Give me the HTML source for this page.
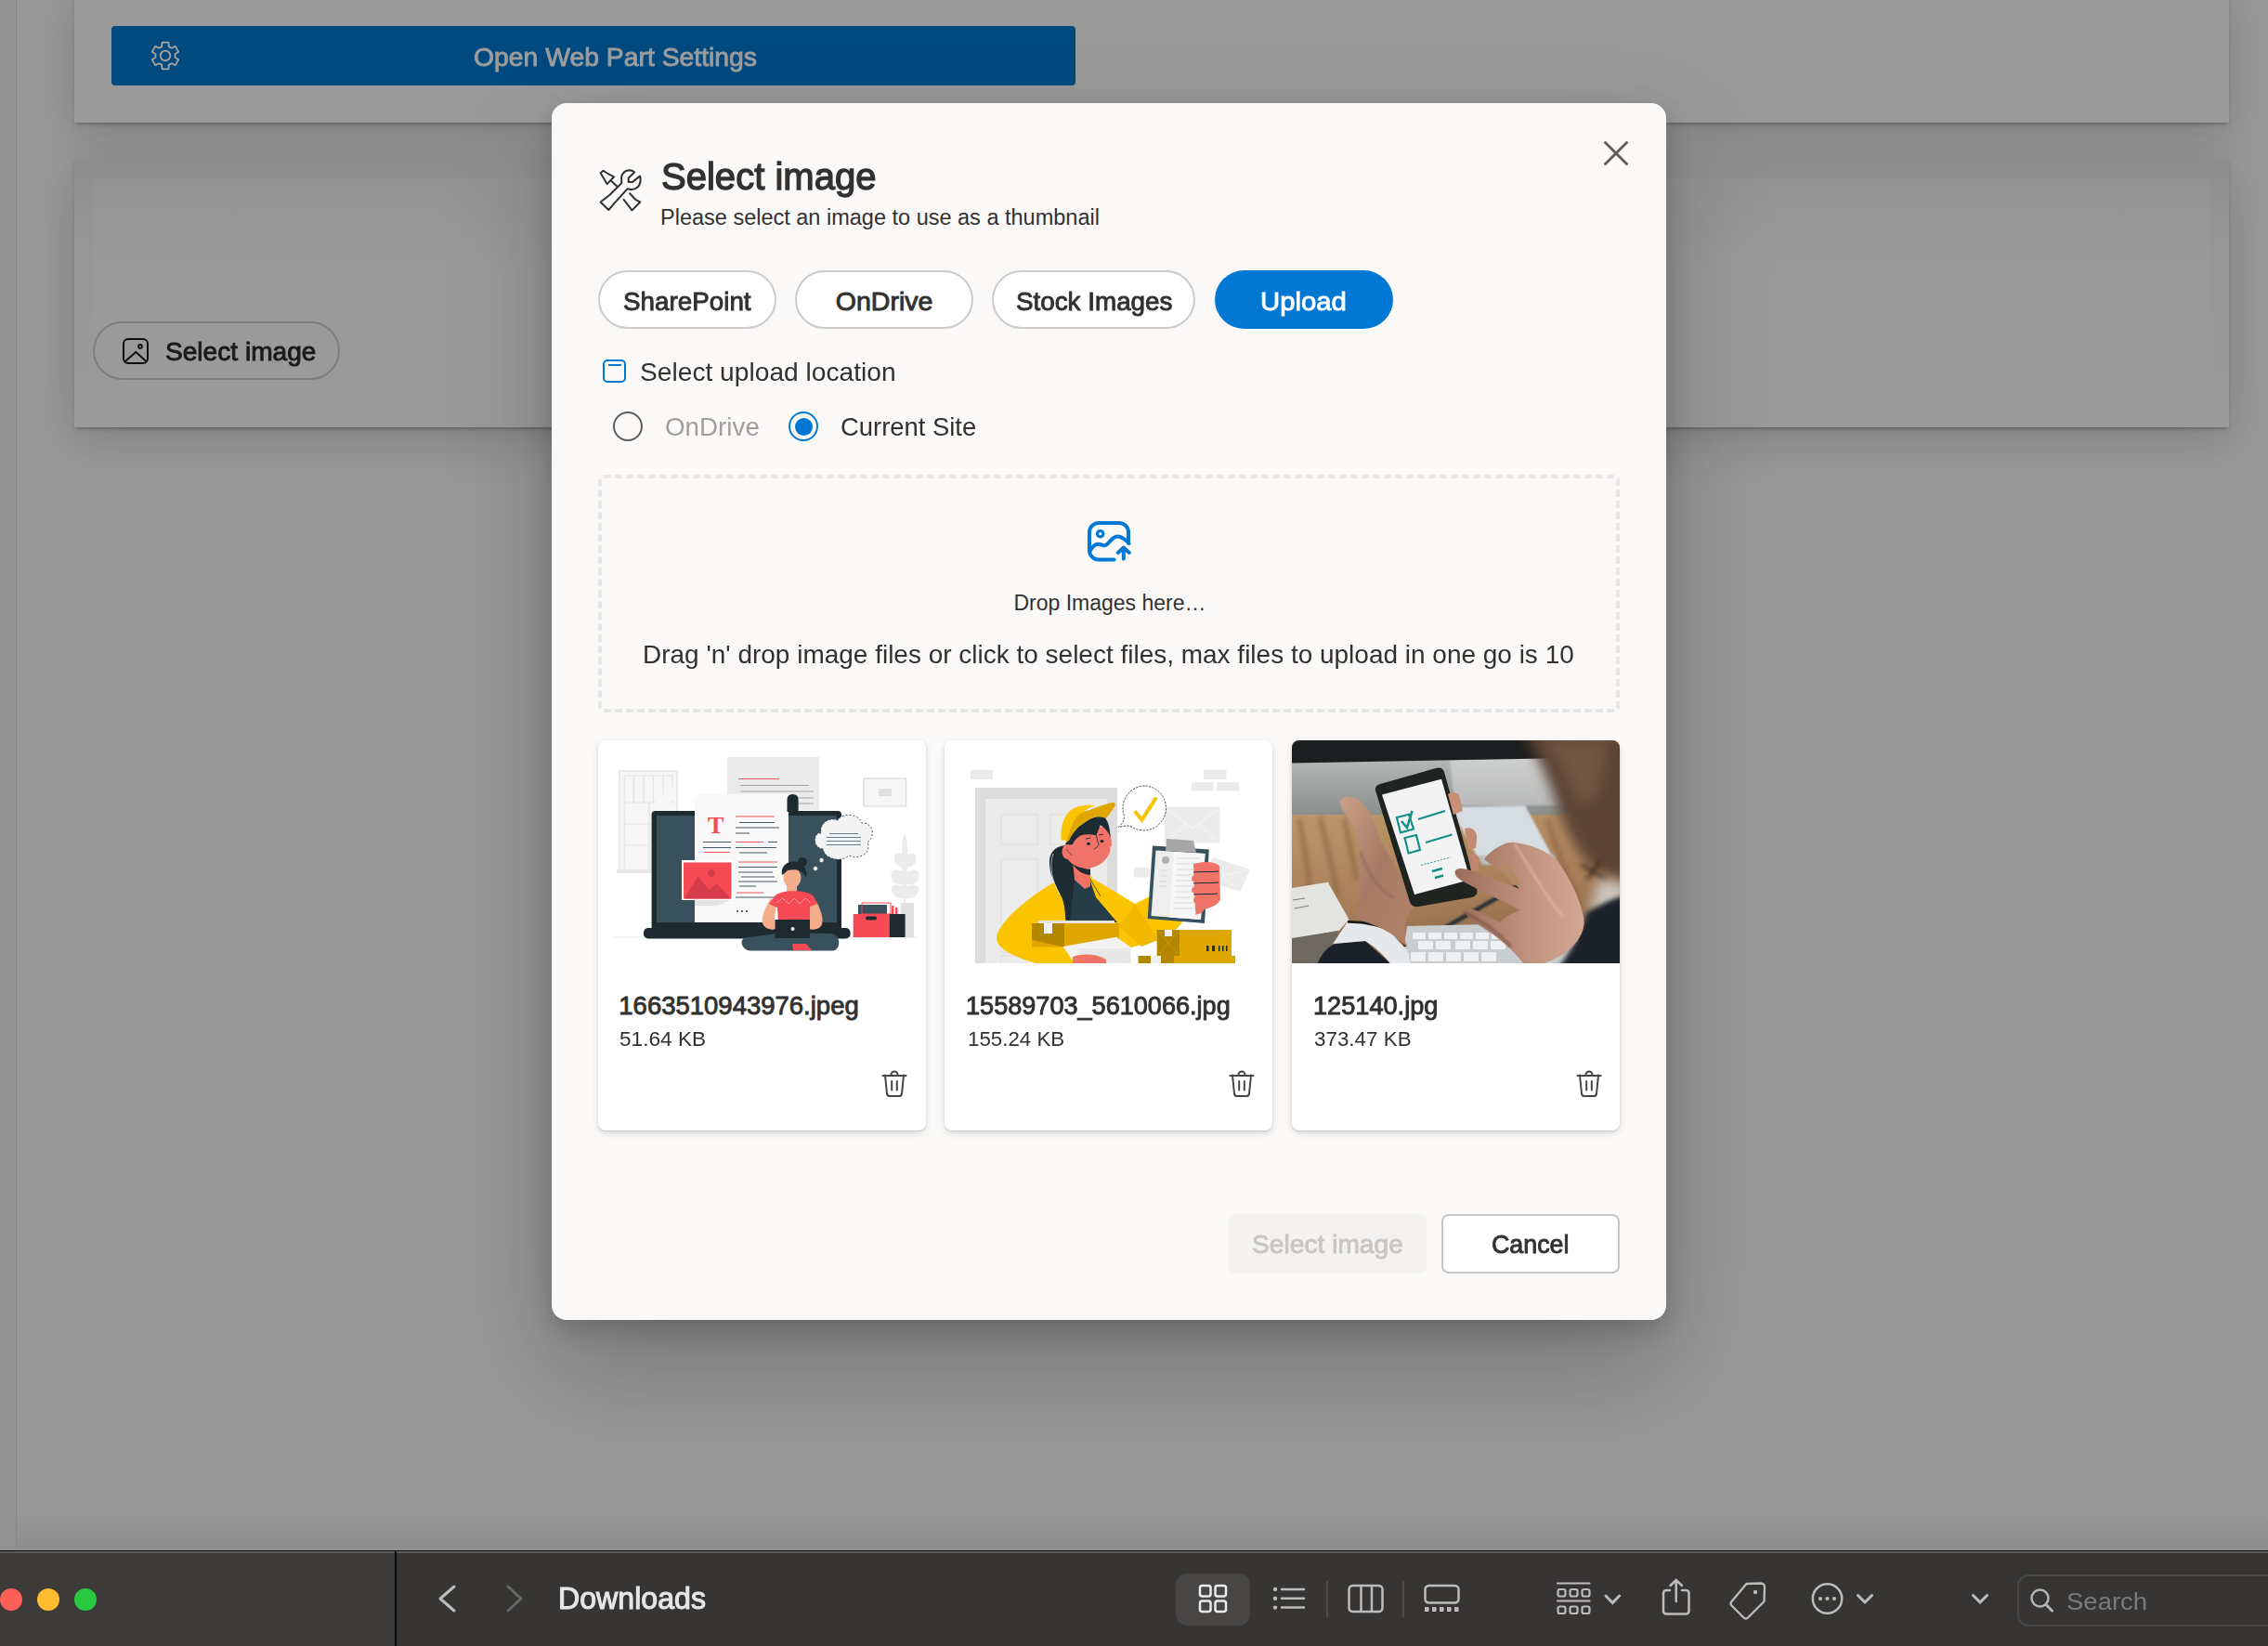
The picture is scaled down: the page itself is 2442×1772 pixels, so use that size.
<!DOCTYPE html>
<html><head><meta charset="utf-8">
<style>
html,body{margin:0;padding:0;}
body{width:2442px;height:1772px;overflow:hidden;position:relative;background:#999999;font-family:"Liberation Sans",sans-serif;}
.a{position:absolute;}
.t{position:absolute;white-space:nowrap;line-height:1;transform-origin:0 0;}
.b{font-weight:700;}
</style></head><body>
<!-- page background -->
<div class="a" style="left:0;top:0;width:17px;height:1669px;background:#929292;"></div>
<div class="a" style="left:17px;top:0;width:1px;height:1669px;background:#868686;"></div>
<div class="a" style="left:18px;top:0;width:2424px;height:1669px;background:#989898;"></div>
<div class="a" style="left:80px;top:-10px;width:2320px;height:142px;background:#9a9a9a;box-shadow:0 3px 4px -1px rgba(0,0,0,.25),0 12px 50px rgba(0,0,0,.16);"></div>
<div class="a" style="left:120px;top:28px;width:1038px;height:64px;background:#004a80;border-radius:4px;"></div>
<svg class="a" style="left:162px;top:44px;" width="32" height="32" viewBox="0 0 32 32"><path d="M12.20 6.10 L12.67 1.58 L19.33 1.58 L19.80 6.10 L22.67 7.76 L26.82 5.91 L30.15 11.67 L26.47 14.34 L26.47 17.66 L30.15 20.33 L26.82 26.09 L22.67 24.24 L19.80 25.90 L19.33 30.42 L12.67 30.42 L12.20 25.90 L9.33 24.24 L5.18 26.09 L1.85 20.33 L5.53 17.66 L5.53 14.34 L1.85 11.67 L5.18 5.91 L9.33 7.76 Z" fill="none" stroke="#a8a49e" stroke-width="1.8" stroke-linejoin="round"/><circle cx="16" cy="16" r="5.3" fill="none" stroke="#a8a49e" stroke-width="1.8"/></svg>

<div class="a" style="left:80px;top:172px;width:2320px;height:288px;background:linear-gradient(#8e8e8e,#989898 110px,#9a9a9a);box-shadow:0 3px 4px -1px rgba(0,0,0,.25),0 12px 50px rgba(0,0,0,.16);"></div>
<div class="a" style="left:100px;top:192px;width:2280px;height:268px;background:linear-gradient(#939393,#9a9a9a 100px,#9a9a9a);"></div>
<div class="a" style="left:100px;top:346px;width:262px;height:59px;border:2px solid #7d7d7d;border-radius:32px;"></div>
<svg class="a" style="left:131px;top:363px;" width="30" height="30" viewBox="0 0 30 30"><rect x="2" y="2" width="26" height="26" rx="5" fill="none" stroke="#0f0f0f" stroke-width="2"/><path d="M3.6 26.2 L15.3 15.9 L26.4 25.9" fill="none" stroke="#0f0f0f" stroke-width="2" stroke-linejoin="round"/><circle cx="20" cy="9.9" r="1.9" fill="none" stroke="#0f0f0f" stroke-width="1.8"/></svg>

<!-- modal -->
<div class="a" style="left:594px;top:111px;width:1200px;height:1310px;background:#faf9f8;border-radius:16px;box-shadow:0 51px 115px rgba(0,0,0,.22),0 10px 29px rgba(0,0,0,.18);"></div>
<svg class="a" style="left:640px;top:178px;" width="56" height="56" viewBox="640 178 56 56"><g fill="none" stroke="#323130" stroke-width="2" stroke-linejoin="round" stroke-linecap="round">
<path d="M646.6 186.2 L649.5 183.7 C652 185.5 656 188 661.1 190.3 L653.6 198.1 Z"/>
<path d="M658.4 195 L664.5 200.8"/>
<path d="M678.1 208.3 L684.2 214.8 L689.3 217.5 L680.5 226.4 L671.6 214.8"/>
<path d="M646.6 217.5 L655.3 226 L661.4 218.9 L675.7 203.2 C677 203.5 678 204 679.1 203.9 C685 204.5 689.5 200 689.6 194 C689.8 192 689.5 190.5 689 189.6 L680.8 196.1 L676.7 196.1 L676.7 191.7 L683.2 185.2 C681.5 183.8 679.5 183.3 677.4 183.3 C672 183.5 668.5 188 669.2 193 L669.3 197.1 L656.3 210 Z"/>
</g></svg>

<svg class="a" style="left:1720px;top:145px;" width="40" height="40" viewBox="1720 145 40 40"><path d="M1728.5 153.5 L1751.5 176.5 M1751.5 153.5 L1728.5 176.5" stroke="#605e5c" stroke-width="3" stroke-linecap="round"/></svg>
<!-- pills -->
<div class="a" style="left:644px;top:291px;width:188px;height:59px;border:2px solid #cdcbc9;border-radius:32px;background:#fff;"></div>
<div class="a" style="left:856px;top:291px;width:188px;height:59px;border:2px solid #cdcbc9;border-radius:32px;background:#fff;"></div>
<div class="a" style="left:1068px;top:291px;width:215px;height:59px;border:2px solid #cdcbc9;border-radius:32px;background:#fff;"></div>
<div class="a" style="left:1308px;top:291px;width:192px;height:63px;border-radius:32px;background:#0078d4;"></div>

<!-- checkbox row -->
<div class="a" style="left:649px;top:387px;width:21px;height:21px;border:2px solid #0078d4;border-radius:5px;"></div>
<div class="a" style="left:655px;top:391.5px;width:14px;height:2px;background:#0078d4;"></div>
<!-- radios -->
<div class="a" style="left:660px;top:443px;width:28px;height:28px;border:2px solid #5c5b5a;border-radius:50%;"></div>
<div class="a" style="left:849px;top:443px;width:28px;height:28px;border:2px solid #0078d4;border-radius:50%;"></div>
<div class="a" style="left:855.5px;top:449.5px;width:19px;height:19px;background:#0078d4;border-radius:50%;"></div>

<!-- dropzone -->
<div class="a" style="left:644px;top:511px;width:1092px;height:248px;border:4px dashed #e8e7e6;border-radius:6px;"></div>
<svg class="a" style="left:1160px;top:550px;" width="70" height="70" viewBox="1160 550 70 70"><g fill="none" stroke="#0078d4" stroke-width="4" stroke-linecap="round" stroke-linejoin="round">
<path d="M1199.5 602.5 L1183 602.5 A10 10 0 0 1 1173 592.5 L1173 573 A10 10 0 0 1 1183 563 L1205 563 A10 10 0 0 1 1215 573 L1215 584.5"/>
<path d="M1174 592.5 C1177 587 1181 585 1184.5 586 C1187.5 587 1189 588.5 1192 586 C1196 582 1199 577 1204 577.5 C1208 578 1212 581 1215.5 585"/>
<circle cx="1184.7" cy="574.7" r="3.2" stroke-width="3.2"/>
<path d="M1209.8 601.5 L1209.8 590 M1203.8 595 L1209.8 589.5 L1215.8 595"/>
</g></svg>

<!-- cards -->
<div class="a" style="left:644px;top:797px;width:353px;height:420px;background:#fff;border-radius:8px;box-shadow:0 3px 7px rgba(0,0,0,.13),0 1px 2px rgba(0,0,0,.11);"></div>
<div class="a" style="left:1017px;top:797px;width:353px;height:420px;background:#fff;border-radius:8px;box-shadow:0 3px 7px rgba(0,0,0,.13),0 1px 2px rgba(0,0,0,.11);"></div>
<div class="a" style="left:1391px;top:797px;width:353px;height:420px;background:#fff;border-radius:8px;box-shadow:0 3px 7px rgba(0,0,0,.13),0 1px 2px rgba(0,0,0,.11);"></div>
<svg class="a" style="left:644px;top:797px;" width="353" height="240" viewBox="0 0 353 240">
<line x1="15" y1="212" x2="345" y2="212" stroke="#ececec" stroke-width="1"/>
<!-- window -->
<rect x="23" y="33" width="62" height="109" fill="#f6f6f6" stroke="#e8e8e8" stroke-width="2"/>
<rect x="20" y="139" width="37" height="4" fill="#e6e6e6"/>
<g stroke="#e3e3e3" stroke-width="1.2" fill="none">
<path d="M28 38 H80 V67 H28 Z M38.5 38 V67 M49 38 V67 M59.5 38 V67 M70 38 V67"/>
<path d="M28 67 V138 M28 90 H55 M28 113 H55 M55 67 V138 M55 90 H82"/>
</g>
<path d="M60 70 L82 48 L82 62 L64 80 Z" fill="#f7f7f7"/>
<!-- back paper -->
<rect x="139" y="18" width="99" height="57" fill="#ebebeb"/>
<g stroke-width="1" fill="none">
<path d="M151 41.5 H195" stroke="#f2555f"/>
<path d="M153 48.5 H227 M153 55 H232" stroke="#9aa3a8"/>
<path d="M208 62 H232 M215 68 H232" stroke="#9aa3a8"/>
</g>
<!-- picture frame -->
<rect x="286" y="41" width="45.5" height="30" fill="#f6f6f6" stroke="#e0e0e0" stroke-width="1.5"/>
<rect x="302" y="52" width="14" height="8" fill="#e0e0e0"/>
<!-- laptop -->
<rect x="57.6" y="76" width="204.4" height="130" rx="4" fill="#1d2b31"/>
<rect x="63" y="81" width="194" height="115" fill="#38515c"/>
<rect x="49" y="202" width="222.6" height="11.5" rx="5" fill="#1d2b31"/>
<!-- document -->
<path d="M104 196 V66 Q104 58 112 58 H205 V196 Z" fill="#f8f8f8"/>
<path d="M203.5 77 V64 Q203.5 58 209.5 58 Q215.6 58 215.6 64 V77 Z" fill="#1d2b31"/>
<text x="118" y="100" font-family="Liberation Serif" font-weight="700" font-size="26" fill="#f64a55">T</text>
<g stroke-width="1" fill="none">
<path d="M148 82 H190 M114 120.5 H142 M148 109.5 H178 M151 131 H193 M149 164 H178" stroke="#f2555f"/>
<path d="M152 88.5 H190 M148 94 H195 M148 100 H163 M113 109.5 H143 M113 115.5 H143 M183 109.5 H193 M148 115.5 H192 M152 121 H182 M151 136.5 H193 M151 142 H188 M154 147 H190 M151 152 H193 M152 157 H170 M148 169 H190" stroke="#455a64"/>
</g>
<path d="M149 184 H151 M154 184 H156 M159 184 H161" stroke="#1d2b31" stroke-width="1.5"/>
<!-- red image -->
<path d="M104 172 H143 L128 178 H104 Z" fill="#e4e4e4"/>
<rect x="90" y="129" width="54.5" height="43" fill="#ffffff"/>
<rect x="92" y="131.5" width="51.5" height="39" fill="#f64a55"/>
<path d="M93 170.5 L107.5 146.5 L120 161 L127.5 154 L143 170.5 Z" fill="#d63d4a"/>
<circle cx="122" cy="143" r="4" fill="#d63d4a"/>
<!-- cloud -->
<g fill="#f3f3f3" stroke="#263238" stroke-width="0.8" stroke-dasharray="2 2">
<path d="M240 100 C232 98 230 116 242 117 C244 128 262 132 270 124 C282 130 295 120 290 110 C300 102 295 88 284 89 C280 78 262 78 258 86 C248 82 238 90 240 100 Z"/>
</g>
<g stroke="#607d8b" stroke-width="1" fill="none"><path d="M249 100.5 H280 M246 104.5 H283 M246 108.5 H283 M246 112.5 H283"/></g>
<circle cx="240.5" cy="129" r="2.5" fill="#f3f3f3" stroke="#263238" stroke-width="0.5"/>
<circle cx="234" cy="138" r="2.5" fill="#f3f3f3" stroke="#263238" stroke-width="0.5"/>
<!-- plant -->
<g fill="#ebebeb">
<path d="M330 101 C334 104 334 130 331 175 L329 175 C326 130 326 104 330 101 Z"/>
<path d="M330 125 C322 118 316 122 320 132 C324 138 330 136 330 136 Z"/>
<path d="M331 125 C339 118 345 122 341 132 C337 138 331 136 331 136 Z"/>
<path d="M330 143 C320 136 312 140 317 151 C322 157 330 155 330 155 Z"/>
<path d="M331 143 C341 136 349 140 344 151 C339 157 331 155 331 155 Z"/>
<path d="M330 158 C318 152 312 158 318 166 C323 172 330 170 330 170 Z"/>
<path d="M331 158 C343 152 349 158 343 166 C338 172 331 170 331 170 Z"/>
</g>
<rect x="326" y="175" width="14" height="37" fill="#e0e0e0"/>
<!-- boxes -->
<rect x="280" y="177" width="31" height="10" fill="#38515c"/>
<path d="M284 175 H315 V187 H284 Z" fill="none" stroke="#f64a55" stroke-width="1"/>
<rect x="316" y="178" width="2.5" height="9" fill="#f64a55"/>
<rect x="320" y="180" width="2.5" height="7" fill="#f64a55"/>
<rect x="274.7" y="187" width="39" height="25" fill="#f64a55"/>
<rect x="288" y="189.5" width="12" height="4" rx="2" fill="#1d2b31"/>
<rect x="313.6" y="187" width="17" height="25" fill="#1d2b31"/>
<!-- girl -->
<path d="M162 212 C150 212 154 226 164 226.5 L252 226.5 C262 226.5 262 208 250 208 L200 207 Z" fill="#38515c"/>
<path d="M209 219 L224 219 L230 226 L210 226 Z" fill="#f64a55"/>
<path d="M186 170 C180 180 174 192 178 199 C182 205 192 205 194 200 L190 193 C190 186 192 180 192 176 Z" fill="#f4ad8a"/>
<path d="M234 172 C240 182 244 194 240 200 C236 205 226 205 224 200 L228 193 C228 186 228 180 228 176 Z" fill="#f4ad8a"/>
<path d="M203 154 H214 V165 H203 Z" fill="#f4ad8a"/>
<path d="M190 168 C195 161 224 160 232 168 L236 176 L228 179 L228 195 L194 195 L193 180 L184 176 Z" fill="#f64a55"/>
<path d="M192 175 L199 170 L205 176 L211 170 L217 176 L223 170 L229 175" stroke="#ffffff" stroke-width="0.7" fill="none" stroke-dasharray="1.5 1"/>
<ellipse cx="209" cy="148" rx="9.5" ry="11" fill="#f4ad8a"/>
<path d="M198 145 C196 134 206 129 214 131 C222 133 226 140 224 148 C220 140 214 138 204 140 C202 142 200 144 198 145 Z" fill="#1d2b31"/>
<circle cx="220" cy="131" r="5" fill="#1d2b31"/>
<rect x="190.6" y="193" width="37.4" height="20" fill="#1d2b31"/>
<circle cx="209.5" cy="203" r="2" fill="#ffffff"/>
</svg>
<svg class="a" style="left:1017px;top:797px;" width="353" height="240" viewBox="0 0 353 240">
<!-- small rects -->
<g fill="#ebebeb">
<rect x="28" y="32" width="24" height="10"/>
<rect x="279" y="32" width="24.5" height="10"/>
<rect x="266" y="45" width="23.5" height="9.5"/>
<rect x="293" y="45" width="24" height="9.5"/>
<rect x="204" y="137" width="17" height="10.5"/>
</g>
<!-- door -->
<rect x="33" y="51" width="153" height="189" fill="#dcdcdc"/>
<rect x="44" y="63" width="131" height="177" fill="#ebebeb"/>
<g fill="#ececec" stroke="#dddddd" stroke-width="1">
<rect x="61" y="80" width="39" height="32"/>
<rect x="114" y="80" width="38" height="32"/>
<rect x="61" y="128" width="39" height="100"/>
<rect x="114" y="128" width="38" height="100"/>
<rect x="61" y="232" width="39" height="10"/>
</g>
<!-- envelopes -->
<rect x="237" y="71.6" width="59.5" height="39" fill="#ebebeb"/>
<path d="M240 74 L267 95 L294 74 M240 109 L260 90 M294 109 L274 90" stroke="#f8f8f8" stroke-width="1" fill="none"/>
<path d="M289 126 L329 139 L318 163 L278 150 Z" fill="#ebebeb"/>
<path d="M289 126 L300 146 L329 139 M300 146 L318 163" stroke="#f8f8f8" stroke-width="1" fill="none"/>
<!-- speech bubble -->
<path d="M216.3 49 A24 24 0 1 1 203 94 C198 90 192 93 187.5 93.4 C193 88 194 84 193 80 A24 24 0 0 1 216.3 49 Z" fill="#ffffff" stroke="#263238" stroke-width="0.9" stroke-dasharray="2.2 1.4"/>
<path d="M204.7 76.3 L212.5 85.6 L228 61.5" stroke="#f9c300" stroke-width="4" fill="none"/>
<!-- yellow body -->
<path d="M56 212 C58 196 92 166 124 150 L156 147 L172 156 L205 176 L221 168 L257 194.5 L250 203 L212 220 L140 240 L98 240 C72 232 56 224 56 212 Z" fill="#fbc400"/>
<path d="M188 200 L212 222 L230 215 L205 176 Z" fill="#f1b800"/>
<!-- ponytail -->
<path d="M130 113 C118 114 112 122 113 134 C114 148 122 160 126.7 170 C130 180 130 188 130.4 194.5 L156 194.5 C152 180 148 165 145 152 C142 142 140 134 137.7 128.6 Z" fill="#1d2b32"/>
<path d="M117 122 C112 135 116 152 124 166" stroke="#ffffff" stroke-width="0.6" fill="none"/>
<!-- apron -->
<path d="M135 194.5 L140 150 L155.6 146 L163.4 169.6 L186 196 Z" fill="#263d47"/>
<path d="M155 146 L163.4 169.6 L169 170 L158 146 Z" fill="#fbc400"/>
<path d="M156 148 L168 168" stroke="#1d2b32" stroke-width="0.7"/>
<!-- neck & face -->
<path d="M137.7 127 L157 133 L157 157 L151 160 L140 150 Z" fill="#ef7467"/>
<path d="M137.7 128.6 C144 136 150 139 157 139 L157 145 C150 145 142 140 137.7 133 Z" fill="#1d2b32"/>
<ellipse cx="154" cy="115.5" rx="25" ry="22" transform="rotate(-15 154 115.5)" fill="#ef7467"/>
<ellipse cx="132.5" cy="120" rx="6" ry="8" fill="#ef7467"/>
<path d="M131 117 C133 119 135 122 137 124" stroke="#1d2b32" stroke-width="0.6" fill="none"/>
<path d="M164 92 C170 92 176 96 179 102 L180 114 L166 110 Z" fill="#ef7467"/>
<!-- hair on head -->
<path d="M130.4 112.2 C134 100 140 94 146.8 91.3 C154 86 160 82 165 82.2 L172.3 82.2 C175 86 177 90 177.7 95.8 L178.7 104 C176 98 172 94 167.7 91.3 C166 95 165 99 163.2 102.2 C158 101 152 101 146.8 102.2 C142 105 139 109 137.7 112.2 Z" fill="#1d2b32"/>
<!-- cap -->
<path d="M125.8 107.7 C124.5 98 126 86 134 77 C140 71 150 69 162 70 C155 73 150 76 146 80 C140 86 137 95 134 107.7 Z" fill="#fbc400"/>
<path d="M130.4 111.3 C134 100 137 90 141.3 84 C145 79 149 77 154 75.8 C164 72 174 68 182.3 66.7 C184 68 184 70 183.2 71.2 C180 76 177 80 174 84 C171 83 168 82 165 82 C156 84 151 88 146.8 91.3 C141 96 137 102 134 107.7 Z" fill="#e0a600"/>
<!-- face details -->
<ellipse cx="155" cy="111.3" rx="2" ry="1.6" fill="#1d2b32"/>
<ellipse cx="169.5" cy="108.6" rx="2" ry="1.6" fill="#1d2b32"/>
<path d="M152 106 L157 105 M166 102 L171 101" stroke="#1d2b32" stroke-width="0.9"/>
<path d="M163 101 L166 113 L163 116 L161 117" stroke="#1d2b32" stroke-width="0.8" fill="none"/>
<!-- clipboard -->
<path d="M224 113.6 L284.8 117.5 L280 197 L218.7 192 Z" fill="#37525e"/>
<path d="M227.5 118.5 L280.5 122 L276 193 L222.5 189 Z" fill="#eeeeee"/>
<path d="M247 120 L280.5 122 L276 193 L242 190.5 Z" fill="#f7f7f7"/>
<path d="M239 106 L268 108 L271 121 L238 119 Z" fill="#a6a6a6"/>
<circle cx="238" cy="129" r="4" fill="#b0b0b0"/>
<g stroke="#d0d0d0" stroke-width="0.8"><path d="M250 127 H275 M250 133 H272 M250 139 H275 M249 145 H274 M249 151 H272 M248 157 H273 M248 163 H272 M248 169 H273 M247 175 H272 M247 181 H270 M232 140 H240 M232 146 H240 M231 152 H239 M231 157 H239"/></g>
<!-- hand -->
<g fill="#ef7467">
<path d="M268 133 C280 130 292 131 296 136 L297 172 C292 180 280 182 270 184 Z"/>
<ellipse cx="283" cy="137" rx="13" ry="6"/>
<ellipse cx="281" cy="149" rx="15" ry="6.5"/>
<ellipse cx="281" cy="161" rx="15" ry="6.5"/>
<ellipse cx="281" cy="172" rx="13" ry="6.5"/>
<path d="M276 176 C282 184 278 186 270 188 L272 176 Z"/>
</g>
<g stroke="#1d2b32" stroke-width="1" fill="none"><path d="M268 142 C276 141 286 142 295 141 M268 154 C276 153 286 154 295 153 M268 166 C276 165 286 166 294 165"/></g>
<!-- box left -->
<rect x="101" y="194" width="82" height="3" fill="#e4e4e4"/>
<rect x="94" y="197" width="94" height="25.6" fill="#e0a600"/>
<path d="M94 197 L129 197 L129 222.6 L94 215 Z" fill="#b38600"/>
<rect x="107" y="197" width="9" height="11" fill="#f0f0f0"/>
<!-- envelope bottom -->
<path d="M127.6 222 L185 211.7 L200.8 223 L200.8 240 L140 240 Z" fill="#f2f2f2"/>
<path d="M143 224 L200 224 L200 240 L150 240 Z" fill="#e8e8e8"/>
<path d="M138 233 C150 229 164 230 174 236 L174 240 L138 240 Z" fill="#ef7467"/>
<!-- box right -->
<rect x="228.8" y="204" width="80.2" height="28" fill="#e0a600"/>
<rect x="228.8" y="204" width="24.2" height="28" fill="#b38600"/>
<path d="M231 206 L251 230 M251 206 L231 230" stroke="#e0a600" stroke-width="0.6"/>
<rect x="237" y="204" width="8" height="7" fill="#f0f0f0"/>
<g fill="#1d2b32"><rect x="282" y="221" width="2.5" height="6"/><rect x="288" y="221" width="3" height="6"/><rect x="295" y="221" width="1.5" height="6"/><rect x="299" y="221" width="1.5" height="6"/><rect x="303" y="221" width="1.5" height="6"/></g>
<rect x="208.6" y="232" width="13.5" height="8" fill="#b38600"/>
<rect x="222" y="232" width="11" height="8" fill="#f0f0f0"/>
<rect x="233" y="232" width="80" height="8" fill="#e0a600"/>
<rect x="233" y="232" width="14" height="8" fill="#b38600"/>
</svg>
<svg class="a" style="left:1391px;top:797px;" width="353" height="240" viewBox="0 0 353 240">
<defs>
<clipPath id="c3"><path d="M0 240 V8 A8 8 0 0 1 8 0 H345 A8 8 0 0 1 353 8 V240 Z"/></clipPath>
<filter id="bl1" x="-20%" y="-20%" width="140%" height="140%"><feGaussianBlur stdDeviation="1"/></filter>
<filter id="bl2" x="-20%" y="-20%" width="140%" height="140%"><feGaussianBlur stdDeviation="2.5"/></filter>
<filter id="bl4" x="-40%" y="-40%" width="180%" height="180%"><feGaussianBlur stdDeviation="7"/></filter>
<linearGradient id="mon" x1="0" y1="0" x2="0" y2="1"><stop offset="0" stop-color="#b8b9b9"/><stop offset="1" stop-color="#8b8f8c"/></linearGradient>
<linearGradient id="mon2" x1="0" y1="0" x2="0" y2="1"><stop offset="0" stop-color="#cfd0d0"/><stop offset="1" stop-color="#b9bbba"/></linearGradient>
<linearGradient id="desk" x1="0" y1="0" x2="0.3" y2="1"><stop offset="0" stop-color="#bd986c"/><stop offset="0.6" stop-color="#a98058"/><stop offset="1" stop-color="#8d6a4e"/></linearGradient>
<linearGradient id="skinL" x1="0" y1="0" x2="1" y2="1"><stop offset="0" stop-color="#c9a087"/><stop offset="0.5" stop-color="#a57a63"/><stop offset="1" stop-color="#b4836b"/></linearGradient>
<linearGradient id="skinR" x1="0" y1="0" x2="1" y2="0"><stop offset="0" stop-color="#9a6e5a"/><stop offset="0.6" stop-color="#c39580"/><stop offset="1" stop-color="#d2a892"/></linearGradient>
</defs>
<g clip-path="url(#c3)">
<rect x="0" y="0" width="353" height="240" fill="#a98462"/>
<!-- desk -->
<rect x="0" y="76" width="353" height="164" fill="url(#desk)"/>
<g stroke="#7a5436" stroke-width="5" opacity="0.5" fill="none" filter="url(#bl2)">
<path d="M8 84 C14 120 20 150 22 190 M30 82 C40 120 46 150 50 170 M56 84 C62 110 66 130 70 150 M250 80 C262 110 280 150 290 190 M275 85 C285 120 300 150 310 180"/>
</g>
<!-- monitor -->
<path d="M0 22 L300 17 L300 80 L0 80 Z" fill="url(#mon)"/>
<path d="M170 18 L290 17 L292 70 L175 70 Z" fill="url(#mon2)" filter="url(#bl1)"/>
<!-- top dark -->
<path d="M0 0 H300 V19 L0 24.5 Z" fill="#1c1f1f"/>
<!-- laptop -->
<path d="M170 72 L251 70 L280 124 L200 126 Z" fill="#d6dde1" filter="url(#bl1)"/>
<path d="M200 124 L282 123 L286 132 L205 134 Z" fill="#b9c0c4" filter="url(#bl1)"/>
<!-- paper bottom left -->
<path d="M0 214 L0 159 L38.7 152.7 L61.6 193 L50.5 205 Z" fill="#e3e4e0"/>
<path d="M0 213 L50 205 L46 240 L0 240 Z" fill="#6e6a62"/>
<path d="M1 172 L14 170 M3 181 L18 178" stroke="#555" stroke-width="1.2" opacity="0.7"/>
<!-- pen -->
<path d="M150 210 L252 152" stroke="#2b3036" stroke-width="4.5" stroke-linecap="round" filter="url(#bl1)"/>
<path d="M244 155 L252 151" stroke="#eeeeee" stroke-width="3" stroke-linecap="round"/>
<!-- keyboard -->
<path d="M124 200 L300 196 L320 240 L118 240 Z" fill="#c9cdcf"/>
<g fill="#eff0f1"><rect x="130" y="207" width="14" height="7" rx="1"/><rect x="147" y="207" width="14" height="7" rx="1"/><rect x="164" y="207" width="14" height="7" rx="1"/><rect x="181" y="207" width="14" height="7" rx="1"/><rect x="198" y="207" width="14" height="7" rx="1"/><rect x="215" y="207" width="14" height="7" rx="1"/><rect x="176" y="216" width="16" height="9" rx="1"/><rect x="195" y="216" width="16" height="9" rx="1"/><rect x="214" y="216" width="16" height="9" rx="1"/><rect x="136" y="216" width="16" height="9" rx="1"/><rect x="155" y="216" width="16" height="9" rx="1"/><rect x="128" y="228" width="16" height="10" rx="1"/><rect x="147" y="228" width="16" height="10" rx="1"/><rect x="166" y="228" width="16" height="10" rx="1"/><rect x="185" y="228" width="16" height="10" rx="1"/><rect x="204" y="228" width="16" height="10" rx="1"/></g>
<!-- right blurred person -->
<path d="M250 -10 H370 V150 C350 152 335 148 322 135 C305 118 292 90 284 66 C276 40 262 15 250 -10 Z" fill="#5c4436" filter="url(#bl4)"/>
<path d="M268 0 C284 14 300 40 306 70 L330 60 L340 0 Z" fill="#7a5e4c" opacity="0.7" filter="url(#bl4)"/>
<path d="M312 134 L338 150 M318 150 L332 130" stroke="#2a2420" stroke-width="3.5" fill="none" opacity="0.8" filter="url(#bl2)"/>
<path d="M330 150 C345 150 360 155 360 160 V190 L320 190 Z" fill="#d9dcdf" opacity="0.8" filter="url(#bl4)"/>
<path d="M318 185 C335 175 350 168 365 165 V250 H282 C300 230 312 205 318 185 Z" fill="#1f242b" filter="url(#bl2)"/>
<!-- suit sleeve & cuff -->
<path d="M27.6 240 C33 228 40 221 47.4 219 L79 216 L105.8 240 Z" fill="#1b2028"/>
<path d="M44.2 219 L60 195.3 C75 196 90 198 101.8 201.7 L124.7 227 L127.9 240 L105.8 240 C96 228 86 220 79 216 Z" fill="#e6e9ec"/>
<path d="M60 195.3 C80 195 100 200 112 208 C118 214 122 220 122.3 222" stroke="#1a1a1a" stroke-width="2.8" fill="none"/>
<rect x="101" y="198" width="5" height="7" fill="#f4f4f4" transform="rotate(20 103 201)"/>
<!-- left hand -->
<path d="M52 66 C54 60 64 59 72 64 C80 70 86 80 90 92 C94 104 98 114 104 124 L128 164 C132 172 136 178 130 182 C122 190 120 200 123 222 C110 208 95 200 68.7 192 C70 175 72 150 73.4 130 C74 115 70 100 64 88 C58 80 52 72 52 66 Z" fill="url(#skinL)"/>
<path d="M74 120 C80 140 92 160 110 170" stroke="#8a6450" stroke-width="3" fill="none" opacity="0.5" filter="url(#bl1)"/>
<!-- phone -->
<path d="M95 47 L155 30 Q162 28 164 34 L199 160 Q201 167 194 169 L136 179 Q129 180 127 174 L90 54 Q89 49 95 47 Z" fill="#1f2421"/>
<path d="M97 58.4 L161 41.8 L192 150 L132 166 Z" fill="#f3f3f3"/>
<g stroke="#12918a" stroke-width="2.2" fill="none">
<path d="M112.9 83 L126 79.7 L131 95.5 L117 99.4 Z"/>
<path d="M118 87 L124 94 L129.5 76" stroke-width="2.6"/>
<path d="M136 85 L165 76"/>
<path d="M121.5 105 L134 102 L138 118 L125.5 121.5 Z"/>
<path d="M144 110 L172.5 101.5"/>
<path d="M139 134.5 L171 126" stroke-width="0.9" stroke-dasharray="2 1.6"/>
<path d="M151 141 L162 138 M154 148 L163 145.5" stroke-width="2.6"/>
</g>
<!-- right fingers on phone (holding hand) -->
<path d="M168 58 C172 54 180 56 181 62 L184 76 L174 80 Z" fill="#c98f76"/>
<path d="M186 95 C194 92 200 98 199 106 L198 116 L190 118 Z" fill="#c48a72"/>
<path d="M190 123 C197 120 203 125 202 132 L200 140 L193 141 Z" fill="#bf8670"/>
<!-- right hand -->
<path d="M175.6 141.7 C176 137 184 137 195 141 L245 160 C238 150 222 140 207 128 C212 121 228 108 240 110 C255 112 275 118 287 131 C300 150 310 170 314 190 C318 210 300 230 272 240 L249 240 C240 228 226 215 212 206 C200 198 190 192 185.8 185 C186 180 192 180 198 183 L224 196 C230 190 236 186 246 183 C225 172 205 163 190 155 C182 151 175 147 175.6 141.7 Z" fill="url(#skinR)"/>
<path d="M228 131 C236 136 244 146 246 158 L236 154 C232 146 226 138 222 134 Z" fill="#b08b66"/>
<path d="M240 112 C256 135 270 165 292 190" stroke="#e6c0aa" stroke-width="3" fill="none" opacity="0.55" filter="url(#bl1)"/>
<path d="M185.8 185 C200 192 220 205 236 222" stroke="#6e4a3c" stroke-width="4" fill="none" opacity="0.5" filter="url(#bl1)"/>
</g>
</svg>


<svg class="a" style="left:946px;top:1149px;" width="34" height="36" viewBox="0 0 34 36"><g fill="none" stroke="#484644" stroke-width="2" stroke-linecap="round" stroke-linejoin="round"><path d="M4.5 9 L29.5 9"/><path d="M13.5 8 A3.5 3.5 0 0 1 20.5 8"/><path d="M7 8.5 L9 28.5 A3 3 0 0 0 12 31 L22 31 A3 3 0 0 0 25 28.5 L27 8.5"/><path d="M14.2 15 L14.2 24.5 M19.8 15 L19.8 24.5"/></g></svg>
<svg class="a" style="left:1320px;top:1149px;" width="34" height="36" viewBox="0 0 34 36"><g fill="none" stroke="#484644" stroke-width="2" stroke-linecap="round" stroke-linejoin="round"><path d="M4.5 9 L29.5 9"/><path d="M13.5 8 A3.5 3.5 0 0 1 20.5 8"/><path d="M7 8.5 L9 28.5 A3 3 0 0 0 12 31 L22 31 A3 3 0 0 0 25 28.5 L27 8.5"/><path d="M14.2 15 L14.2 24.5 M19.8 15 L19.8 24.5"/></g></svg>
<svg class="a" style="left:1694px;top:1149px;" width="34" height="36" viewBox="0 0 34 36"><g fill="none" stroke="#484644" stroke-width="2" stroke-linecap="round" stroke-linejoin="round"><path d="M4.5 9 L29.5 9"/><path d="M13.5 8 A3.5 3.5 0 0 1 20.5 8"/><path d="M7 8.5 L9 28.5 A3 3 0 0 0 12 31 L22 31 A3 3 0 0 0 25 28.5 L27 8.5"/><path d="M14.2 15 L14.2 24.5 M19.8 15 L19.8 24.5"/></g></svg>
<!-- footer buttons -->
<div class="a" style="left:1322px;top:1307px;width:214px;height:64px;background:#f3f2f1;border-radius:8px;"></div>
<div class="a" style="left:1552px;top:1307px;width:188px;height:60px;background:#fff;border:2px solid #c8c6c4;border-radius:8px;"></div>

<!-- finder bar -->
<div class="a" style="left:18px;top:1625px;width:2424px;height:44px;background:linear-gradient(rgba(0,0,0,0),rgba(0,0,0,.07));"></div>
<div class="a" style="left:0;top:1669px;width:2442px;height:103px;background:#363534;"></div>
<div class="a" style="left:0;top:1669px;width:425px;height:103px;background:#3d3b3a;"></div>
<div class="a" style="left:0;top:1669px;width:2442px;height:1px;background:#0a0a0a;"></div>
<div class="a" style="left:0;top:1670px;width:2442px;height:2px;background:#5c5b5a;"></div>
<div class="a" style="left:425px;top:1670px;width:2px;height:102px;background:#0a0a0a;"></div>
<div class="a" style="left:0;top:1710px;width:24px;height:24px;border-radius:50%;background:#fe5f57;"></div>
<div class="a" style="left:40px;top:1710px;width:24px;height:24px;border-radius:50%;background:#febc2e;"></div>
<div class="a" style="left:80px;top:1710px;width:24px;height:24px;border-radius:50%;background:#28c840;"></div>
<svg class="a" style="left:440px;top:1690px;" width="2002" height="70" viewBox="440 1690 2002 70">
<g fill="none" stroke-linecap="round" stroke-linejoin="round">
<path d="M489 1708 L474 1721 L489 1734" stroke="#bdbcbb" stroke-width="3"/>
<path d="M547 1708 L561 1721 L547 1734" stroke="#686766" stroke-width="3"/>
</g>
<rect x="1266" y="1694" width="80" height="56" rx="12" fill="#474645"/>
<g fill="none" stroke="#ececec" stroke-width="2.5">
<rect x="1292" y="1707" width="11.5" height="11.5" rx="2.5"/><rect x="1308.5" y="1707" width="11.5" height="11.5" rx="2.5"/>
<rect x="1292" y="1723.5" width="11.5" height="11.5" rx="2.5"/><rect x="1308.5" y="1723.5" width="11.5" height="11.5" rx="2.5"/>
</g>
<g fill="#bdbcbb"><circle cx="1373" cy="1711" r="2.2"/><circle cx="1373" cy="1720.7" r="2.2"/><circle cx="1373" cy="1730.6" r="2.2"/></g>
<g fill="none" stroke="#bdbcbb" stroke-width="2.5" stroke-linecap="round">
<path d="M1380 1711 H1404 M1380 1720.7 H1404 M1380 1730.6 H1404"/>
<rect x="1452.5" y="1707" width="36" height="28" rx="4"/>
<path d="M1465.5 1707 V1735 M1477 1707 V1735"/>
<rect x="1534.5" y="1707" width="36" height="18.5" rx="4"/>
<path d="M1729 1718 L1736.3 1725.5 L1743.6 1718" stroke-width="3"/>
<path d="M2000.5 1717.5 L2008 1725 L2015.5 1717.5" stroke-width="3"/>
<path d="M2124.5 1717.5 L2132 1725 L2139.5 1717.5" stroke-width="3"/>
<path d="M1677 1704.5 H1711.5 M1677 1723.5 H1711.5" stroke-width="2.2"/>
<rect x="1677.5" y="1711" width="8" height="7.5" rx="2" stroke-width="2.2"/><rect x="1690.5" y="1711" width="8" height="7.5" rx="2" stroke-width="2.2"/><rect x="1703.5" y="1711" width="8" height="7.5" rx="2" stroke-width="2.2"/>
<rect x="1677.5" y="1729.5" width="8" height="7.5" rx="2" stroke-width="2.2"/><rect x="1690.5" y="1729.5" width="8" height="7.5" rx="2" stroke-width="2.2"/><rect x="1703.5" y="1729.5" width="8" height="7.5" rx="2" stroke-width="2.2"/>
<path d="M1798 1712 H1794 A3 3 0 0 0 1791 1715 V1734.5 A3 3 0 0 0 1794 1737.5 H1815.5 A3 3 0 0 0 1818.5 1734.5 V1715 A3 3 0 0 0 1815.5 1712 H1811"/>
<path d="M1804.7 1724 V1701.5 M1798.5 1707 L1804.7 1701 L1811 1707"/>
<path d="M1880.5 1705 L1896 1704.5 A4 4 0 0 1 1900 1708.5 L1899.5 1724 L1882 1741.5 A3 3 0 0 1 1877.5 1741.5 L1864.5 1728.5 A3 3 0 0 1 1864.5 1724 Z" stroke-width="2.3" stroke-linejoin="round"/>
<circle cx="1967.5" cy="1721" r="15.7" stroke-width="2.5"/>
<circle cx="2196.5" cy="1720.5" r="9" stroke="#b5b4b3" stroke-width="2.5"/>
<path d="M2203 1727.5 L2209.5 1734" stroke="#b5b4b3" stroke-width="3"/>
</g>
<circle cx="1890" cy="1714" r="2.2" fill="#bdbcbb"/>
<g fill="#bdbcbb"><circle cx="1960" cy="1721" r="2.1"/><circle cx="1967.5" cy="1721" r="2.1"/><circle cx="1975" cy="1721" r="2.1"/></g>
<g fill="#bdbcbb"><rect x="1534" y="1730" width="4.5" height="5"/><rect x="1542" y="1730" width="4.5" height="5"/><rect x="1550" y="1730" width="4.5" height="5"/><rect x="1558" y="1730" width="4.5" height="5"/><rect x="1566" y="1730" width="4.5" height="5"/></g>
<path d="M1429 1702 V1741 M1511 1702 V1741" stroke="#555453" stroke-width="1.5"/>
</svg>
<div class="a" style="left:2172px;top:1695px;width:300px;height:52px;border:2px solid #484746;border-radius:12px;"></div>
<div class="t" style="left:510.21px;top:47.17px;font-size:28.5px;color:#9c9c9c;transform:scaleX(0.9941);-webkit-text-stroke:0.94px #9c9c9c;">Open Web Part Settings</div>
<div class="t" style="left:177.60px;top:365.29px;font-size:28px;color:#1a1a1a;transform:scaleX(1.0037);-webkit-text-stroke:0.92px #1a1a1a;">Select image</div>
<div class="t" style="left:712.02px;top:170.29px;font-size:41px;color:#323130;transform:scaleX(0.9766);-webkit-text-stroke:1.35px #323130;">Select image</div>
<div class="t" style="left:711.00px;top:222.80px;font-size:23.5px;color:#323130;">Please select an image to use as a thumbnail</div>
<div class="t" style="left:671.02px;top:310.37px;font-size:28.5px;color:#323130;transform:scaleX(0.9757);-webkit-text-stroke:0.94px #323130;">SharePoint</div>
<div class="t" style="left:899.80px;top:310.37px;font-size:28.5px;color:#323130;-webkit-text-stroke:0.94px #323130;">OnDrive</div>
<div class="t" style="left:1093.62px;top:310.37px;font-size:28.5px;color:#323130;transform:scaleX(0.9754);-webkit-text-stroke:0.94px #323130;">Stock Images</div>
<div class="t" style="left:1356.95px;top:310.37px;font-size:28.5px;color:#ffffff;transform:scaleX(1.0264);-webkit-text-stroke:0.94px #ffffff;">Upload</div>
<div class="t" style="left:688.52px;top:386.17px;font-size:28.5px;color:#323130;transform:scaleX(0.9884);">Select upload location</div>
<div class="t" style="left:715.91px;top:446.09px;font-size:28px;color:#a19f9d;transform:scaleX(0.9920);">OnDrive</div>
<div class="t" style="left:904.82px;top:446.09px;font-size:28px;color:#323130;transform:scaleX(0.9782);">Current Site</div>
<div class="t" style="left:1091.40px;top:637.53px;font-size:23px;color:#323130;">Drop Images here…</div>
<div class="t" style="left:692.34px;top:689.87px;font-size:28.5px;color:#323130;transform:scaleX(0.9816);">Drag 'n' drop image files or click to select files, max files to upload in one go is 10</div>
<div class="t" style="left:666.30px;top:1068.52px;font-size:27.5px;color:#323130;-webkit-text-stroke:0.91px #323130;">1663510943976.jpeg</div>
<div class="t" style="left:1039.93px;top:1068.52px;font-size:27.5px;color:#323130;transform:scaleX(0.9850);-webkit-text-stroke:0.91px #323130;">15589703_5610066.jpg</div>
<div class="t" style="left:1413.53px;top:1068.52px;font-size:27.5px;color:#323130;transform:scaleX(0.9872);-webkit-text-stroke:0.91px #323130;">125140.jpg</div>
<div class="t" style="left:666.99px;top:1107.95px;font-size:22.5px;color:#323130;transform:scaleX(1.0056);">51.64 KB</div>
<div class="t" style="left:1041.52px;top:1107.95px;font-size:22.5px;color:#323130;transform:scaleX(0.9912);">155.24 KB</div>
<div class="t" style="left:1414.50px;top:1107.95px;font-size:22.5px;color:#323130;transform:scaleX(0.9951);">373.47 KB</div>
<div class="t" style="left:1347.79px;top:1326.29px;font-size:28px;color:#c8c6c4;transform:scaleX(1.0063);-webkit-text-stroke:0.92px #c8c6c4;">Select image</div>
<div class="t" style="left:1606.24px;top:1326.29px;font-size:28px;color:#323130;transform:scaleX(0.9576);-webkit-text-stroke:0.92px #323130;">Cancel</div>
<div class="t" style="left:601.02px;top:1705.48px;font-size:32.5px;color:#e6e6e6;transform:scaleX(0.9886);-webkit-text-stroke:1.07px #e6e6e6;">Downloads</div>
<div class="t" style="left:2224.62px;top:1711.26px;font-size:26.5px;color:#7b7b7b;transform:scaleX(1.0375);">Search</div>

</body></html>
